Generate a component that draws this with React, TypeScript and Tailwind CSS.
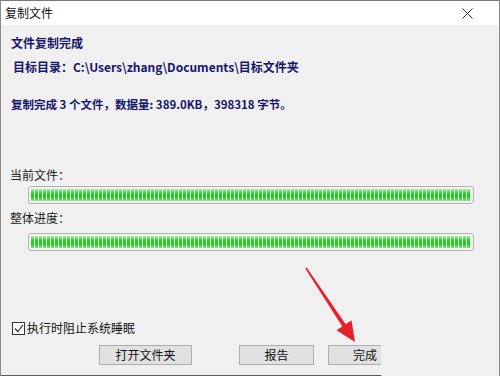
import React from 'react';

const navy = 'text-[#16166b]';

function ProgressBar() {
  return (
    <div className="ml-[27px] h-[18px] w-[446px] rounded-[3px] border border-[#b4b4b4] bg-[#f4f4f4] p-[2px]">
      <div className="h-full w-full rounded-[1px] bg-[image:repeating-linear-gradient(90deg,transparent_0px,transparent_3px,#e4f7e4_3px,#e4f7e4_4px),linear-gradient(180deg,#a6eba6,#2dd12d_35%,#20c720_65%,#8adf8a)]" />
    </div>
  );
}

function Button({ label, className }: { label: string; className: string }) {
  return (
    <div
      className={`flex h-[20px] items-center border border-[#adadad] bg-[#e1e1e1] text-[12px] leading-[16px] text-[#111] ${className}`}
    >
      {label}
    </div>
  );
}

export default function App() {
  return (
    <div className="relative h-[376px] w-[500px] overflow-hidden border-l border-r border-[#8a8a8a] bg-[#f0f0f0] font-['Noto_Sans_CJK_SC','Noto_Sans',sans-serif]">
      {/* title bar */}
      <div className="flex h-[25px] items-center justify-between border-t border-[#7a7a7a] bg-white pl-[4px] pr-[26px]">
        <span className="text-[12px] leading-[16px] text-[#111]">复制文件</span>
        <svg width="11" height="11" viewBox="0 0 11 11">
          <path d="M0.5 0.5 L10.5 10.5 M10.5 0.5 L0.5 10.5" stroke="#333" strokeWidth="1" />
        </svg>
      </div>

      <div className="flex flex-col">
        <div className={`ml-[10px] mt-[10px] text-[12px] font-bold leading-[16px] ${navy}`}>文件复制完成</div>
        <div className={`ml-[12px] mt-[8px] text-[12px] font-bold leading-[16px] ${navy}`}>
          目标目录：C:\Users\zhang\Documents\目标文件夹
        </div>
        <div className={`ml-[10px] mt-[21px] text-[11.5px] font-bold leading-[16px] ${navy}`}>
          复制完成 3 个文件，数据量: 389.0KB，398318 字节。
        </div>

        <div className="ml-[9px] mt-[55px] text-[12px] leading-[16px] text-[#222]">当前文件：</div>
        <div className="mt-[3px]">
          <ProgressBar />
        </div>
        <div className="ml-[9px] mt-[6px] text-[12px] leading-[16px] text-[#222]">整体进度：</div>
        <div className="mt-[7px]">
          <ProgressBar />
        </div>

        <div className="ml-[11px] mt-[69px] flex items-center gap-[2px]">
          <div className="flex h-[13px] w-[13px] items-center justify-center border border-[#333] bg-white">
            <svg width="10" height="9" viewBox="0 0 10 9">
              <polyline points="1,4.5 3.8,7.5 9,1" fill="none" stroke="#333" strokeWidth="1.2" />
            </svg>
          </div>
          <span className="text-[12px] leading-[16px] text-[#111]">执行时阻止系统睡眠</span>
        </div>

        <div className="mt-[9px] flex">
          <Button label="打开文件夹" className="ml-[98px] w-[93px] justify-center" />
          <Button label="报告" className="ml-[47px] w-[75px] justify-center" />
          <Button label="完成" className="ml-[14px] w-[53px] justify-end border-r-0 pr-[4px]" />
        </div>
        <div className="mt-[10px] h-[1px] w-[380px] bg-[#5a5a5a]" />
      </div>

      {/* red annotation arrow */}
      <svg className="pointer-events-none absolute left-0 top-0" width="500" height="376" viewBox="0 0 500 376">
        <polygon
          points="304.3,268.4 305.7,267.6 344.7,324.2 350.5,320.3 354,342 335.5,330.3 341.3,326.4"
          fill="#e8202a"
        />
      </svg>
    </div>
  );
}
